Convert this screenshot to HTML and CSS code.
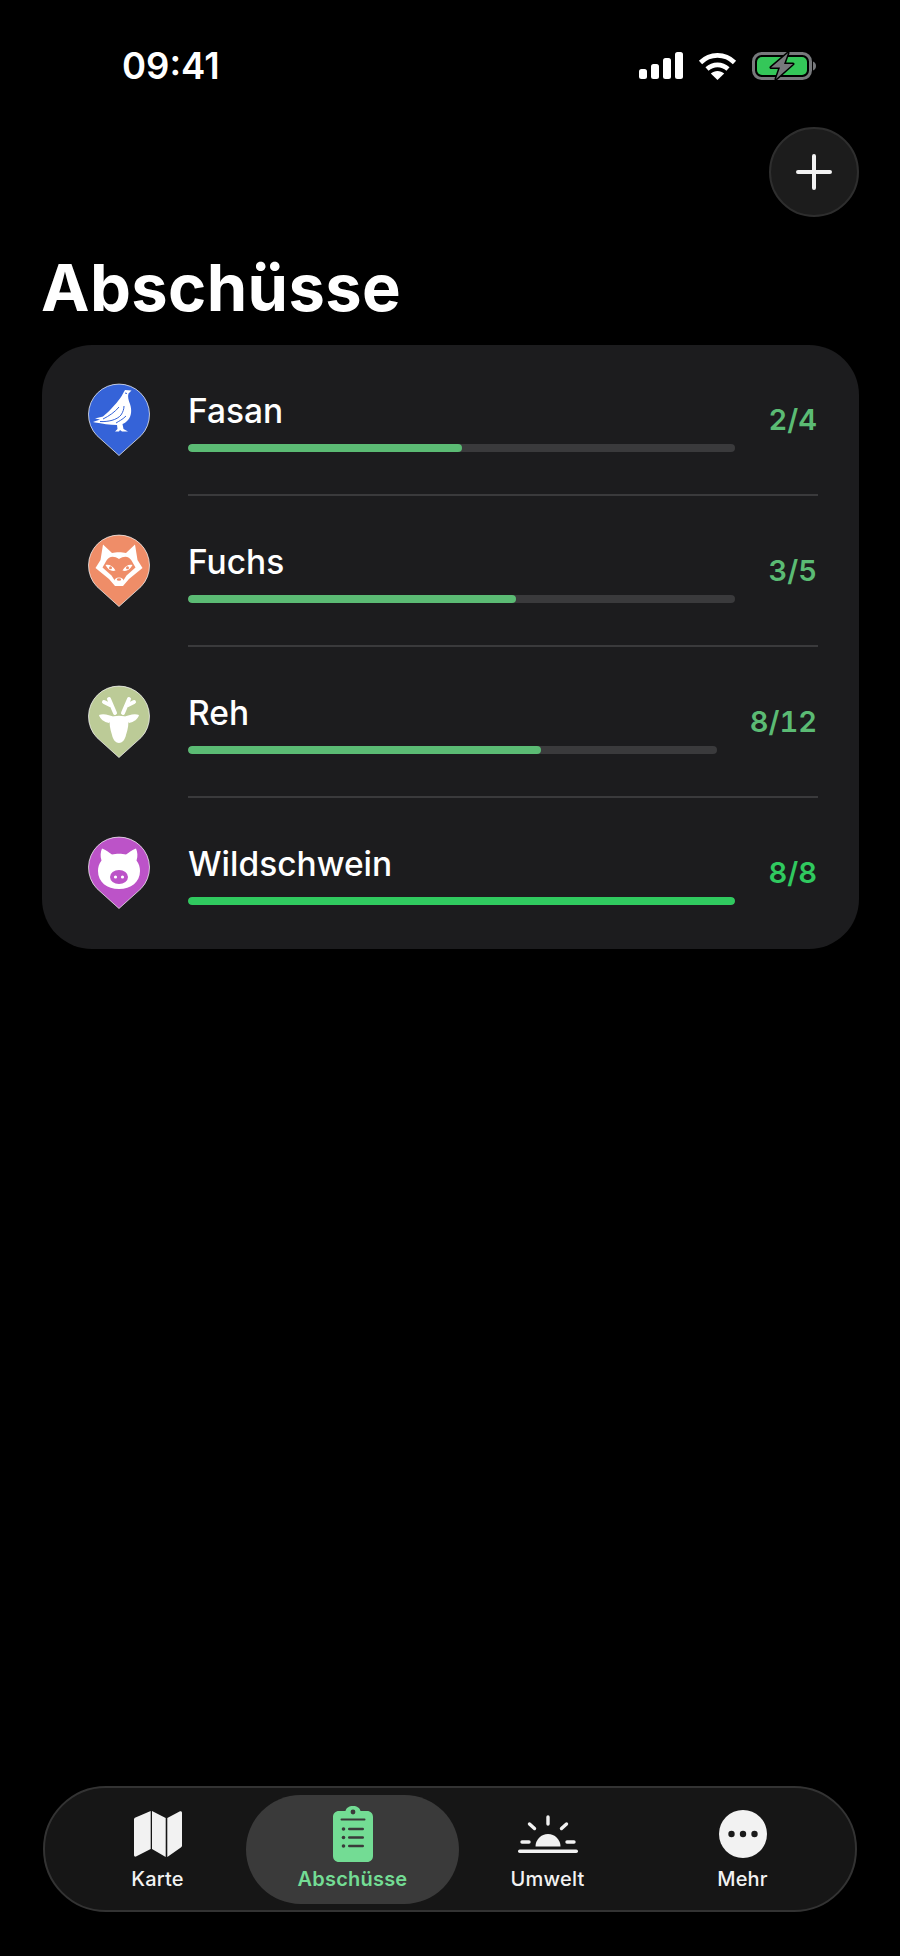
FILE: index.html
```html
<!DOCTYPE html>
<html lang="de">

<head>
    <meta charset="UTF-8">
    <meta name="viewport" content="width=device-width, initial-scale=1.0">
    <title>Abschüsse</title>
    <link rel="stylesheet" href="styles.css">
</head>

<body>
    <div class="screen">
        <div class="status-bar">
            <span class="time">09:41</span>
            <div class="status-icons">
                <svg width="44" height="27" viewBox="0 0 44 27" fill="#fff">
                    <rect x="0" y="17" width="8" height="10" rx="2.5" />
                    <rect x="12" y="12" width="8" height="15" rx="2.5" />
                    <rect x="24" y="6" width="8" height="21" rx="2.5" />
                    <rect x="36" y="0" width="8" height="27" rx="2.5" />
                </svg>
                <svg width="39" height="28" viewBox="0 0 39 28" fill="none" stroke="#fff" stroke-width="4.6">
                    <path d="M2.5 10.5C12 1 27 1 36.5 10.5" />
                    <path d="M9 17C15 11.5 24 11.500 30 17" />
                    <path d="M19.500 28L12.800 21.600C16.500 18.200 22.500 18.200 26.200 21.600Z" fill="#fff" stroke="none" />
                </svg>
                <svg width="64" height="28" viewBox="0 0 64 28">
                    <rect x="1.500" y="1.500" width="57" height="25" rx="8" fill="none" stroke="#77797c" stroke-width="3" />
                    <rect x="5" y="5" width="50" height="18" rx="5" fill="#34c759" />
                    <path d="M61 9.500c2 .6 3 2.500 3 4.500s-1 3.900-3 4.500z" fill="#77797c" />
                    <path d="M36 1L19 15.500H28L24 27L41 12H32Z" fill="#77797c" stroke="#000" stroke-width="3" stroke-linejoin="round" paint-order="stroke" />
                </svg>
            </div>
        </div>

        <div class="top-actions">
            <button class="add-btn" type="button">
                <svg width="36" height="36" viewBox="0 0 36 36" fill="none" stroke="#f2f2f2" stroke-width="4" stroke-linecap="round">
                    <path d="M18 2V34M2 18H34" />
                </svg>
            </button>
        </div>

        <h1 class="title">Abschüsse</h1>

        <div class="card">
            <div class="row">
                <svg class="pin" viewBox="0 0 62 73">
                    <path class="pin-shape" d="M31 72.500L8.900 52.600A30.500 30.500 0 1 1 53.100 52.600Z" fill="#3563d8" />
                    <path fill="#fff" d="M37 7L43.500 7.500L40.500 10.500C39.500 14 40.500 17 42 21C44 27 43.500 33 40 37C38 39.500 36 40.500 34.500 41L35.500 46L40 48.500L34 48.500L32 47L31 48.500L27 48.500L29.500 46L29 42C22 42 14 40.500 7 39.500L5 39L12 36.500L7 35.500L15 33.500C20 29.500 27 22 30 18C33 15 34.500 11 37 7Z" />
                    <path fill="none" stroke="#3563d8" stroke-width="1" d="M15 36C21 33 27 29 31 24M12 38.500C20 39 29 37 33 32C35 29 36 26 36 23M28 40C31 38 34 37 38 33M37 10L39 10.500" />
                </svg>
                <div class="row-main">
                    <div class="name">Fasan</div>
                    <div class="track">
                        <div class="fill" style="width: 50%"></div>
                    </div>
                </div>
                <span class="count">2/4</span>
            </div>
            <div class="divider"></div>
            <div class="row">
                <svg class="pin" viewBox="0 0 62 73">
                    <path class="pin-shape" d="M31 72.500L8.900 52.600A30.500 30.500 0 1 1 53.100 52.600Z" fill="#ef8d68" />
                    <path fill="#fff" d="M15 10.500L24 19C28 18 34 18 38 19L47 10.500L49.500 26L54.500 34L41 45L35 52H27L21 45L7.500 34L12.500 26Z" />
                    <path fill="#ef8d68" d="M31 25C26 21.500 21 22 18.500 26.500L14.500 33.500L23.500 41.500L27 47H35L38.500 41.500L47.500 33.500L43.500 26.500C41 22 36 21.500 31 25Z" />
                    <path fill="#fff" d="M17.500 31C21 30 25 32 27.500 36.500C24 38 20 36 17.500 31ZM44.500 31C41 30 37 32 34.500 36.500C38 38 42 36 44.500 31Z" />
                    <circle cx="22.500" cy="33.800" r="1.500" fill="#ef8d68" />
                    <circle cx="39.500" cy="33.800" r="1.500" fill="#ef8d68" />
                    <ellipse cx="31" cy="47.500" rx="5" ry="4" fill="#fff" />
                    <ellipse cx="31" cy="45.500" rx="2.200" ry="1.200" fill="#ef8d68" />
                </svg>
                <div class="row-main">
                    <div class="name">Fuchs</div>
                    <div class="track">
                        <div class="fill" style="width: 60%"></div>
                    </div>
                </div>
                <span class="count">3/5</span>
            </div>
            <div class="divider"></div>
            <div class="row">
                <svg class="pin" viewBox="0 0 62 73">
                    <path class="pin-shape" d="M31 72.500L8.900 52.600A30.500 30.500 0 1 1 53.100 52.600Z" fill="#bccb97" />
                    <path fill="none" stroke="#fff" stroke-width="4" stroke-linecap="round" d="M27 28L21 14M24 21L16 17M35 28L41 14M38 21L46 17" />
                    <path fill="#fff" d="M11 30C15 28 22 30 26 32L21 38C16 37 12 34 11 30ZM51 30C47 28 40 30 36 32L41 38C46 37 50 34 51 30Z" />
                    <path fill="#fff" d="M22 33C26 30 36 30 40 33C41 38 40 44 38 50C37 55 34 58 31 58C28 58 25 55 24 50C22 44 21 38 22 33Z" />
                </svg>
                <div class="row-main">
                    <div class="name">Reh</div>
                    <div class="track">
                        <div class="fill" style="width: 66.7%"></div>
                    </div>
                </div>
                <span class="count">8/12</span>
            </div>
            <div class="divider"></div>
            <div class="row">
                <svg class="pin" viewBox="0 0 62 73">
                    <path class="pin-shape" d="M31 72.500L8.900 52.600A30.500 30.500 0 1 1 53.100 52.600Z" fill="#bc53c8" />
                    <path fill="#fff" d="M14 12.500C18 14 21 16.500 24 18.500C28 17.500 34 17.500 38 18.500C41 16.500 44 14 48 12.500C49.500 16 50 20 48.500 24.500C51 28 52 31 52 35C52 46 43 53 31 53S10 46 10 35C10 31 11 28 13.500 24.500C12 20 12.500 16 14 12.500Z" />
                    <ellipse cx="31" cy="41" rx="9" ry="7" fill="#bc53c8" />
                    <circle cx="27.500" cy="41" r="1.600" fill="#fff" />
                    <circle cx="34.500" cy="41" r="1.600" fill="#fff" />
                </svg>
                <div class="row-main">
                    <div class="name">Wildschwein</div>
                    <div class="track">
                        <div class="fill done" style="width: 100%"></div>
                    </div>
                </div>
                <span class="count done">8/8</span>
            </div>
        </div>

        <div class="tab-bar">
            <div class="tab">
                <div class="tab-icon">
                    <svg width="48" height="46" viewBox="0 0 48 46" fill="#f2f2f2">
                        <path d="M16.700 0V38L2 45.500C1 46 0 45.200 0 44V8.500C0 7.500 .6 6.800 1.500 6.400ZM18 0L31.700 7V46L18 38ZM33.300 7L46 .3C47 -.2 48 .6 48 1.700V34.500C48 35.500 47.400 36.200 46.500 36.700L33.300 46Z" />
                    </svg>
                </div>
                <span class="tab-label">Karte</span>
            </div>
            <div class="tab active">
                <div class="tab-icon">
                    <svg width="40" height="56" viewBox="0 0 40 56">
                        <path fill="#73dc94" d="M6 5h6.500C13 2 16 0 20 0s7 2 7.500 5H34c3.500 0 6 2.500 6 6v39c0 3.500-2.500 6-6 6H6c-3.500 0-6-2.500-6-6V11c0-3.500 2.500-6 6-6z" />
                        <circle cx="20" cy="6" r="2.400" fill="#3a3a3a" />
                        <path fill="none" stroke="#3a3a3a" stroke-width="2" stroke-linecap="round" d="M8.500 13.500h23" />
                        <g fill="#3a3a3a">
                            <circle cx="10.500" cy="23" r="1.800" />
                            <circle cx="10.500" cy="31.500" r="1.800" />
                            <circle cx="10.500" cy="40" r="1.800" />
                            <rect x="15" y="21.800" width="16" height="2.400" rx="1.200" />
                            <rect x="15" y="30.300" width="16" height="2.400" rx="1.200" />
                            <rect x="15" y="38.800" width="16" height="2.400" rx="1.200" />
                        </g>
                    </svg>
                </div>
                <span class="tab-label">Abschüsse</span>
            </div>
            <div class="tab">
                <div class="tab-icon">
                    <svg width="60" height="38" viewBox="0 0 60 38" fill="#f2f2f2">
                        <path d="M17.500 31.500a12.500 12.500 0 0 1 25 0z" />
                        <rect x="0" y="34.500" width="60" height="3.500" rx="1.750" />
                        <g fill="none" stroke="#f2f2f2" stroke-width="3.400" stroke-linecap="round">
                            <path d="M30 2V9M11.500 9l5 4.500M48.500 9l-5 4.500M4 27h7M49 27h7" />
                        </g>
                    </svg>
                </div>
                <span class="tab-label">Umwelt</span>
            </div>
            <div class="tab">
                <div class="tab-icon">
                    <svg width="48" height="48" viewBox="0 0 48 48">
                        <circle cx="24" cy="24" r="24" fill="#f2f2f2" />
                        <g fill="#1a1a1a">
                            <circle cx="12.500" cy="24" r="3.200" />
                            <circle cx="24" cy="24" r="3.200" />
                            <circle cx="35.500" cy="24" r="3.200" />
                        </g>
                    </svg>
                </div>
                <span class="tab-label">Mehr</span>
            </div>
        </div>
    </div>
</body>

</html>
```

FILE: styles.css
```css
* {
    box-sizing: border-box;
}

body {
    margin: 0;
    background-color: #000;
    font-family: 'Inter', 'Liberation Sans', sans-serif;
    color: #fff;
}

.screen {
    height: 1956px;
    padding: 0 41px 44px 42px;
    display: flex;
    flex-direction: column;
}

.status-bar {
    height: 127px;
    padding: 52px 43px 0 80px;
    display: flex;
    justify-content: space-between;
    align-items: flex-start;
}

.time {
    font-size: 36.5px;
    font-weight: 600;
    line-height: 28px;
}

.status-icons {
    display: flex;
    align-items: flex-start;
    gap: 15px;
}

.top-actions {
    display: flex;
    justify-content: flex-end;
}

.add-btn {
    width: 90px;
    height: 90px;
    padding: 0;
    border: 2px solid #2e2e2e;
    border-radius: 50%;
    background-color: #1c1c1c;
    display: flex;
    align-items: center;
    justify-content: center;
}

.title {
    margin: 35px 0 21px -1px;
    font-size: 65px;
    font-weight: 700;
    letter-spacing: .4px;
    line-height: 72px;
}

.card {
    padding-bottom: 2px;
    border-radius: 50px;
    background-color: #1c1c1e;
}

.row {
    padding: 38px 42px 38px 46px;
    display: flex;
    align-items: center;
}

.pin {
    width: 62px;
    height: 73px;
    margin-right: 38px;
    flex-shrink: 0;
}

.pin-shape {
    stroke: #fff;
    stroke-opacity: .7;
    stroke-width: 1;
}

.row-main {
    flex: 1;
    padding-top: 4px;
}

.name {
    font-size: 33.5px;
    font-weight: 500;
    line-height: 38px;
    margin-bottom: 14px;
}

.track {
    height: 8px;
    border-radius: 4px;
    background-color: #3a3a3c;
    overflow: hidden;
}

.fill {
    height: 100%;
    border-radius: 4px;
    background-color: #5bbb74;
}

.fill.done {
    background-color: #30c95f;
}

.count {
    margin-left: 33px;
    font-size: 29px;
    font-weight: 600;
    font-variant-numeric: tabular-nums;
    color: #5bbb74;
}

.count.done {
    color: #30c95f;
}

.divider {
    height: 2px;
    margin: 0 41px 0 146px;
    background-color: #3a3a3c;
}

.tab-bar {
    margin: auto 2px 0 1px;
    height: 126px;
    padding: 7px 15px 6px;
    border: 2px solid #333;
    border-radius: 63px;
    background-color: #161616;
    display: grid;
    grid-template-columns: repeat(4, 1fr);
}

.tab {
    padding-top: 11px;
    display: flex;
    flex-direction: column;
    align-items: center;
    gap: 6px;
}

.tab-icon {
    height: 56px;
    display: flex;
    align-items: center;
}

.tab.active {
    margin: 0 -9px;
    border-radius: 56px;
    background-color: #3a3a3a;
}

.tab-label {
    font-size: 20px;
    font-weight: 500;
    letter-spacing: .2px;
    line-height: 22px;
    color: #f2f2f2;
}

.tab.active .tab-label {
    color: #73dc94;
    font-weight: 600;
}
```
